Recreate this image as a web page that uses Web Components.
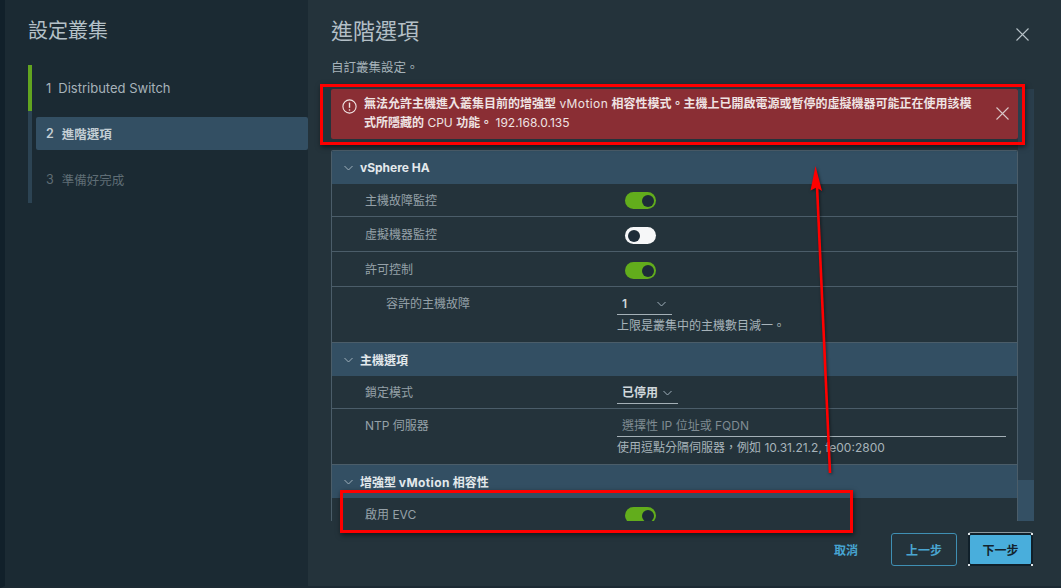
<!DOCTYPE html>
<html lang="zh-Hant">
<head>
<meta charset="utf-8">
<title>設定叢集</title>
<style>
  html, body { margin: 0; height: 100%; background: #24333b; overflow: hidden; }
  body { font-family: Inter, "Noto Sans CJK TC", sans-serif; font-size: 12px; color: #a7b3ba; }
</style>
</head>
<body>
<cluster-wizard>
  <wizard-step slot="steps" num="1" state="done">Distributed Switch</wizard-step>
  <wizard-step slot="steps" num="2" state="active" style="font-size:12.5px">進階選項</wizard-step>
  <wizard-step slot="steps" num="3" state="off" style="font-size:12.5px">準備好完成</wizard-step>

  <alert-banner slot="alert">
    <b>無法允許主機進入叢集目前的增強型</b> <span style="letter-spacing:.4px">vMotion</span> <b>相容性模式。主機上已開啟電源或暫停的虛擬機器可能正在使用該模</b><br><b>式所隱藏的</b> CPU <b>功能。</b> 192.168.0.135
  </alert-banner>

  <stack-header slot="panel">vSphere HA</stack-header>
  <stack-row slot="panel" style="--h:33px" label="主機故障監控"><toggle-switch on></toggle-switch></stack-row>
  <stack-row slot="panel" style="--h:35px;--lo:9px;--to:10px" label="虛擬機器監控"><toggle-switch></toggle-switch></stack-row>
  <stack-row slot="panel" style="--h:35px;--lo:9px;--to:10px" label="許可控制"><toggle-switch on></toggle-switch></stack-row>
  <stack-row slot="panel" style="--h:56px" label="容許的主機故障" indent>
    <select-box value="1" width="55" hint="上限是叢集中的主機數目減一。"></select-box>
  </stack-row>
  <stack-header slot="panel">主機選項</stack-header>
  <stack-row slot="panel" style="--h:33px" label="鎖定模式"><select-box value="已停用" width="61"></select-box></stack-row>
  <stack-row slot="panel" style="--h:56px" label="NTP 伺服器">
    <select-box placeholder="選擇性 IP 位址或 FQDN" width="389" hint="使用逗點分隔伺服器，例如 10.31.21.2, fe00:2800"></select-box>
  </stack-row>
  <stack-header slot="panel">增強型 <span style="letter-spacing:.4px">vMotion</span> 相容性</stack-header>
  <stack-row slot="panel" style="--h:33px;--to:9px" label="啟用 EVC"><toggle-switch on></toggle-switch></stack-row>

  <wizard-button slot="footer" kind="link">取消</wizard-button>
  <wizard-button slot="footer" kind="outline">上一步</wizard-button>
  <wizard-button slot="footer" kind="primary">下一步</wizard-button>
</cluster-wizard>
<red-annotations></red-annotations>

<script>
const crossIcon = (size, color) => `<svg width="${size}" height="${size}" viewBox="0 0 13 13" fill="none" stroke="${color}" stroke-width="1.1"><path d="M.5.5l12 12M12.5.5l-12 12"/></svg>`;
const chevron = (color) => `<svg width="9" height="6" viewBox="0 0 9 6" fill="none" stroke="${color}" stroke-width="1"><path d="M.5 1l4 4 4-4"/></svg>`;

class ClusterWizard extends HTMLElement {
    constructor() {
        super();
        this.attachShadow({ mode: 'open' });
        this.shadowRoot.innerHTML = `
<style>
  :host { display: flex; height: 588px; width: 1061px; box-sizing: border-box; border-left: 5px solid #11202a; border-bottom: 2px solid #1c2a33; }
  aside { width: 303px; flex: none; background: #1b2a33; box-sizing: border-box; padding-left: 24px; }
  h1 { margin: 0 0 0 -1px; padding-top: 18px; height: 65px; box-sizing: border-box; font-size: 20px; font-weight: 400; line-height: 27px; color: #b5c1c8; }
  .steps { display: flex; flex-direction: column; margin-left: -1px; }
  main { flex: 1; display: flex; flex-direction: column; min-width: 0; padding-left: 23px; box-sizing: border-box; }
  .top { display: flex; justify-content: space-between; height: 89px; flex: none; }
  h2 { margin: 0; padding-top: 17px; font-size: 22px; font-weight: 400; line-height: 29px; color: #b3bfc6; }
  p { margin: 13px 0 0; font-size: 12.5px; line-height: 17px; color: #a7b3ba; }
  .close { margin: 28px 32px 0 0; height: 13px; }
  .scroll { display: flex; height: 432px; flex: none; padding-right: 27px; }
  .col { width: 687px; flex: none; display: flex; flex-direction: column; gap: 11px; overflow: hidden; }
  .panel { display: flex; flex-direction: column; border: solid #4b5d69; border-width: 1px 1px 0; border-radius: 2px 2px 0 0; flex: 1; overflow: hidden; }
  .bar { width: 16px; flex: none; background: #2a3e4c; display: flex; flex-direction: column; justify-content: flex-end; }
  .thumb { height: 41px; background: #345064; }
  footer { display: flex; justify-content: flex-end; align-items: flex-start; padding: 12px 28px 0 0; }
</style>
<aside>
  <h1>設定叢集</h1>
  <div class="steps"><slot name="steps"></slot></div>
</aside>
<main>
  <div class="top">
    <div><h2>進階選項</h2><p>自訂叢集設定。</p></div>
    <div class="close">${crossIcon(13, '#b7c2c8')}</div>
  </div>
  <div class="scroll">
    <div class="col">
      <slot name="alert"></slot>
      <div class="panel"><slot name="panel"></slot></div>
    </div>
    <div class="bar"><div class="thumb"></div></div>
  </div>
  <footer><slot name="footer"></slot></footer>
</main>`;
    }
}

class WizardStep extends HTMLElement {
    constructor() {
        super();
        this.attachShadow({ mode: 'open' });
        const state = this.getAttribute('state');
        const color = { done: '#a7b3ba', active: '#c3ced4', off: '#5f6d75' }[state];
        const bar = state === 'done' ? '#62a420' : '#2c4353';
        this.shadowRoot.innerHTML = `
<style>
  :host { display: flex; height: 46px; box-sizing: border-box; border-left: 4px solid ${bar}; font-size: 13px; color: ${color}; font-weight: ${state === 'active' ? 600 : 400}; }
  .item { flex: 1; margin: ${state === 'done' ? '6px 0 6px 4px' : '6px 0 7px 4px'}; padding-left: 10px; display: flex; align-items: center; gap: ${state === 'done' ? 7 : 8}px; border-radius: 2px; background: ${state === 'active' ? '#334f63' : 'transparent'}; }
</style>
<div class="item"><span>${this.getAttribute('num')}</span><span><slot></slot></span></div>`;
    }
}

class AlertBanner extends HTMLElement {
    constructor() {
        super();
        this.attachShadow({ mode: 'open' });
        this.shadowRoot.innerHTML = `
<style>
  :host { display: flex; flex: none; height: 50px; box-sizing: border-box; background: #8a2e34; border-radius: 2px; color: #efe3e3; font-size: 12px; line-height: 19px; padding: 5px 0 0 11px; }
  .icon { width: 22px; flex: none; padding-top: 5px; }
  .text { width: 606px; flex: none; white-space: nowrap; }
  .x { margin: 12px 0 0 26px; height: 13px; }
</style>
<div class="icon"><svg width="15" height="15" viewBox="0 0 15 15" fill="none" stroke="#f0e4e4" stroke-width="1.1"><circle cx="7.5" cy="7.5" r="6.6"/><path d="M7.5 3.6v5.2" stroke-width="1.4"/><circle cx="7.5" cy="11" r=".8" fill="#f0e4e4" stroke="none"/></svg></div>
<div class="text"><slot></slot></div>
<div class="x">${crossIcon(13, '#d9c6c8')}</div>`;
    }
}

class StackHeader extends HTMLElement {
    constructor() {
        super();
        this.attachShadow({ mode: 'open' });
        this.shadowRoot.innerHTML = `
<style>
  :host { display: flex; align-items: center; height: 33px; flex: none; background: #334f63; padding-left: 12px; gap: 7px; color: #e3e9ec; font-size: 12px; font-weight: 700; }
</style>
${chevron('#9fb0bb')}<span><slot></slot></span>`;
    }
}

class StackRow extends HTMLElement {
    constructor() {
        super();
        this.attachShadow({ mode: 'open' });
        const indent = this.hasAttribute('indent') ? 54 : 33;
        this.shadowRoot.innerHTML = `
<style>
  :host { display: grid; grid-template-columns: 285px 1fr; flex: none; height: var(--h); box-sizing: border-box; border-bottom: 1px solid #4b5d69; }
  :host(:last-child) { border-bottom: 0; }
  .label { padding: var(--lo, 8px) 0 0 ${indent}px; line-height: 17px; font-size: 12px; color: #95a1a8; }
  .value { min-width: 0; }
</style>
<div class="label">${this.getAttribute('label')}</div>
<div class="value"><slot></slot></div>`;
    }
}

class ToggleSwitch extends HTMLElement {
    constructor() {
        super();
        this.attachShadow({ mode: 'open' });
        const on = this.hasAttribute('on');
        this.shadowRoot.innerHTML = `
<style>
  :host { display: block; width: 31px; height: 17px; margin: var(--to, 8px) 0 0 8px; border-radius: 9px; background: ${on ? '#62ad1c' : '#f6f7f8'}; position: relative; }
  i { position: absolute; top: 2.5px; ${on ? 'right' : 'left'}: 2.5px; width: 12px; height: 12px; border-radius: 50%; background: #1d2c38; }
</style>
<i></i>`;
    }
}

class SelectBox extends HTMLElement {
    constructor() {
        super();
        this.attachShadow({ mode: 'open' });
        const value = this.getAttribute('value');
        const ph = this.getAttribute('placeholder');
        const hint = this.getAttribute('hint');
        this.shadowRoot.innerHTML = `
<style>
  :host { display: block; padding-top: 8px; }
  .box { width: ${this.getAttribute('width')}px; height: 20px; box-sizing: border-box; border-bottom: 1px solid #a4b0b7; padding: 0 6px 0 5px; display: flex; align-items: flex-start; justify-content: space-between; line-height: 17px; font-size: 12px; color: ${ph ? '#7f8b92' : '#d0d8dc'}; font-weight: ${ph ? 400 : 600}; }
  svg { margin-top: 6px; }
  .hint { font-size: 12px; line-height: 17px; padding-top: 2px; color: #a7b3ba; white-space: nowrap; }
</style>
<div class="box"><span>${value || ph}</span>${ph ? '' : chevron('#9fb0bb')}</div>
${hint ? `<div class="hint">${hint}</div>` : ''}`;
    }
}

class WizardButton extends HTMLElement {
    constructor() {
        super();
        this.attachShadow({ mode: 'open' });
        const kind = this.getAttribute('kind');
        const looks = {
            link: 'width: 24px; margin-right: 33px; color: #47a5d2;',
            outline: 'width: 66px; margin-right: 11px; color: #4aa6d2; border: 1px solid #3f8fb3; border-radius: 3px;',
            primary: 'width: 65px; color: #13242e; background: #49aedc; border: 2px solid #10202a; border-radius: 3px; box-shadow: 0 -1px 0 #8d9aa1; position: relative;'
        }[kind];
        this.shadowRoot.innerHTML = `
<style>
  :host { display: flex; align-items: center; justify-content: center; height: 33px; box-sizing: border-box; font-size: 12px; font-weight: 700; ${looks} }
  .corner { position: absolute; width: 2px; height: 2px; background: #dfe5e8; }
</style>
<slot></slot>
${kind === 'primary' ? `
<i class="corner" style="left:-2px;top:-2px"></i><i class="corner" style="right:-2px;top:-2px"></i>
<i class="corner" style="left:-2px;bottom:-2px"></i><i class="corner" style="right:-2px;bottom:-2px"></i>` : ''}`;
    }
}

class RedAnnotations extends HTMLElement {
    constructor() {
        super();
        this.attachShadow({ mode: 'open' });
        this.shadowRoot.innerHTML = `
<style>
  :host { position: absolute; left: 0; top: 0; width: 1061px; height: 588px; pointer-events: none; }
  div { position: absolute; box-sizing: border-box; border: 3px solid #f00; box-shadow: 1px 2px 5px rgba(0,0,0,.55); }
  svg { position: absolute; left: 0; top: 0; filter: drop-shadow(1px 1px 1.5px rgba(0,0,0,.5)); }
</style>
<div style="left:320px;top:84px;width:705px;height:61px"></div>
<div style="left:340px;top:490px;width:513px;height:43px"></div>
<svg width="1061" height="588">
  <path d="M830 473L817 186" stroke="#f00" stroke-width="2.6" fill="none"/>
  <path d="M815.5 166L822 191L816.5 187.5L810.5 190.5Z" fill="#f00"/>
</svg>`;
    }
}

customElements.define('cluster-wizard', ClusterWizard);
customElements.define('wizard-step', WizardStep);
customElements.define('alert-banner', AlertBanner);
customElements.define('stack-header', StackHeader);
customElements.define('stack-row', StackRow);
customElements.define('toggle-switch', ToggleSwitch);
customElements.define('select-box', SelectBox);
customElements.define('wizard-button', WizardButton);
customElements.define('red-annotations', RedAnnotations);
</script>
</body>
</html>
